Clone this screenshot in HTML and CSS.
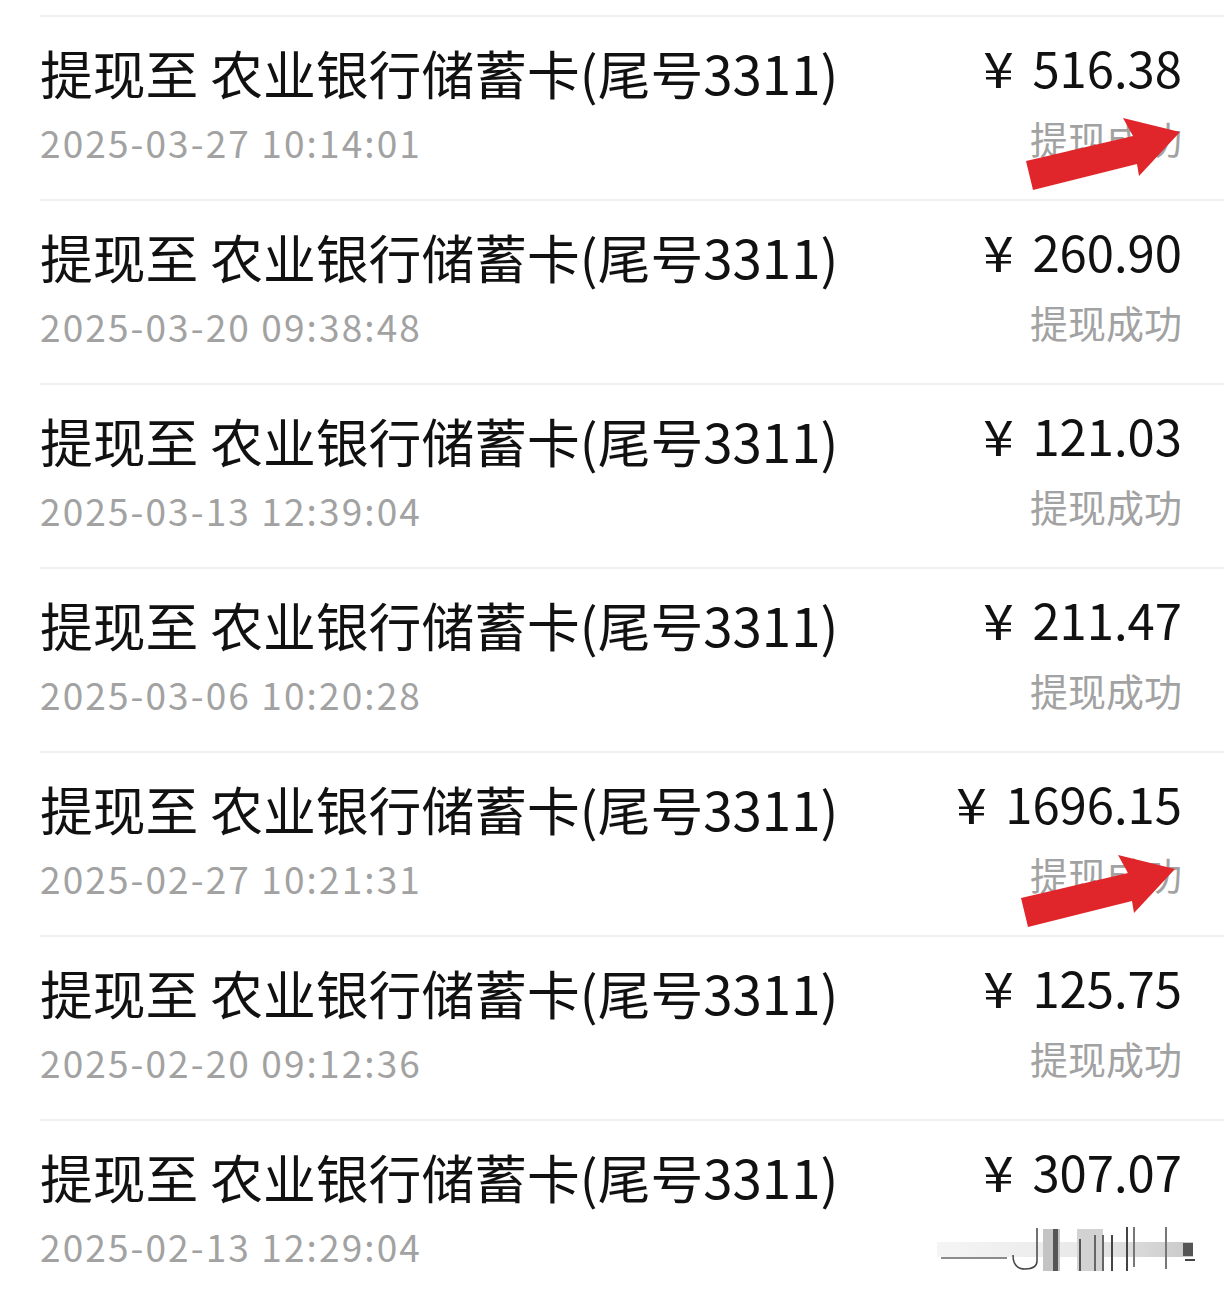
FILE: index.html
```html
<!DOCTYPE html>
<html lang="zh-CN">
<head>
    <meta charset="UTF-8">
    <meta name="viewport" content="width=device-width, initial-scale=1.0">
    <title>提现记录</title>
    <link rel="stylesheet" href="styles.css">
</head>
<body>
    <ul class="records">
        <li class="record">
            <div class="record-main">
                <div class="record-title">提现至 农业银行储蓄卡(尾号3311)</div>
                <div class="record-time">2025-03-27 10:14:01</div>
            </div>
            <div class="record-side">
                <div class="record-amount"><span class="yen">¥</span>516.38</div>
                <div class="record-status">提现成功</div>
            </div>
            <svg class="arrow" viewBox="0 0 165 80" width="165" height="80">
                <polygon points="6,48 113,23 103,5 160,19 119,63 117,51 13,77" fill="#e0262a"/>
            </svg>
        </li>
        <li class="record">
            <div class="record-main">
                <div class="record-title">提现至 农业银行储蓄卡(尾号3311)</div>
                <div class="record-time">2025-03-20 09:38:48</div>
            </div>
            <div class="record-side">
                <div class="record-amount"><span class="yen">¥</span>260.90</div>
                <div class="record-status">提现成功</div>
            </div>
        </li>
        <li class="record">
            <div class="record-main">
                <div class="record-title">提现至 农业银行储蓄卡(尾号3311)</div>
                <div class="record-time">2025-03-13 12:39:04</div>
            </div>
            <div class="record-side">
                <div class="record-amount"><span class="yen">¥</span>121.03</div>
                <div class="record-status">提现成功</div>
            </div>
        </li>
        <li class="record">
            <div class="record-main">
                <div class="record-title">提现至 农业银行储蓄卡(尾号3311)</div>
                <div class="record-time">2025-03-06 10:20:28</div>
            </div>
            <div class="record-side">
                <div class="record-amount"><span class="yen">¥</span>211.47</div>
                <div class="record-status">提现成功</div>
            </div>
        </li>
        <li class="record">
            <div class="record-main">
                <div class="record-title">提现至 农业银行储蓄卡(尾号3311)</div>
                <div class="record-time">2025-02-27 10:21:31</div>
            </div>
            <div class="record-side">
                <div class="record-amount"><span class="yen">¥</span>1696.15</div>
                <div class="record-status">提现成功</div>
            </div>
            <svg class="arrow arrow-low" viewBox="0 0 165 80" width="165" height="80">
                <polygon points="6,48 113,23 103,5 160,19 119,63 117,51 13,77" fill="#e0262a"/>
            </svg>
        </li>
        <li class="record">
            <div class="record-main">
                <div class="record-title">提现至 农业银行储蓄卡(尾号3311)</div>
                <div class="record-time">2025-02-20 09:12:36</div>
            </div>
            <div class="record-side">
                <div class="record-amount"><span class="yen">¥</span>125.75</div>
                <div class="record-status">提现成功</div>
            </div>
        </li>
        <li class="record">
            <div class="record-main">
                <div class="record-title">提现至 农业银行储蓄卡(尾号3311)</div>
                <div class="record-time">2025-02-13 12:29:04</div>
            </div>
            <div class="record-side">
                <div class="record-amount"><span class="yen">¥</span>307.07</div>
                <div class="record-status record-status-hidden">提现成功</div>
            </div>
            <!-- 截图底部的水印残影 -->
            <svg class="smear" viewBox="0 0 260 50" width="260" height="50">
                <defs>
                    <linearGradient id="band" x1="0" x2="1" y1="0" y2="0">
                        <stop offset="0" stop-color="#f5f5f5"/>
                        <stop offset="0.6" stop-color="#e8e8e8"/>
                        <stop offset="1" stop-color="#c8c8c8"/>
                    </linearGradient>
                </defs>
                <rect x="0" y="17" width="256" height="15" fill="url(#band)"/>
                <rect x="246" y="18" width="10" height="13" fill="#555"/>
                <line x1="4" y1="33" x2="70" y2="33" stroke="#666" stroke-width="1.5"/>
                <path d="M76 30 Q76 44 88 44 Q100 44 100 36 L100 3" fill="none" stroke="#444" stroke-width="1.5"/>
                <rect x="106" y="4" width="17" height="42" fill="#c4c4c4"/>
                <rect x="116" y="4" width="5" height="42" fill="#555"/>
                <rect x="140" y="4" width="26" height="42" fill="#d2d2d2"/>
                <rect x="142" y="14" width="2" height="32" fill="#555"/>
                <rect x="157" y="10" width="2" height="36" fill="#666"/>
                <rect x="165" y="10" width="2" height="36" fill="#666"/>
                <rect x="174" y="10" width="2" height="36" fill="#444"/>
                <rect x="189" y="2" width="2" height="44" fill="#444"/>
                <rect x="196" y="2" width="2" height="40" fill="#777"/>
                <rect x="228" y="2" width="2" height="42" fill="#777"/>
                <rect x="248" y="34" width="10" height="2" fill="#444"/>
            </svg>
        </li>
    </ul>
</body>
</html>
```

FILE: styles.css
```css
body {
    margin: 0;
    background-color: #fff;
    font-family: "Noto Sans CJK SC", "Noto Sans", sans-serif;
    overflow: hidden;
}
.records {
    list-style: none;
    margin: 15px 0 0 40px;
    padding: 0;
}
.record {
    position: relative;
    display: flex;
    justify-content: space-between;
    align-items: flex-start;
    box-sizing: border-box;
    height: 184px;
    padding: 23px 42px 0 0;
    border-top: 2px solid #efefef;
}
.record-title {
    font-size: 52.8px;
    line-height: 64px;
    color: #111;
    white-space: nowrap;
}
.record-time {
    font-size: 37px;
    line-height: 76px;
    letter-spacing: 2.1px;
    color: #a2a2a2;
}
.record-side {
    text-align: right;
}
.record-amount {
    font-size: 49px;
    line-height: 54px;
    color: #111;
    white-space: nowrap;
}
.yen {
    display: inline-block;
    margin-right: 20px;
    transform: scaleX(1.12);
}
.record-status {
    font-size: 38px;
    line-height: 88px;
    color: #a2a2a2;
}
.record-status-hidden {
    visibility: hidden;
}
.arrow {
    position: absolute;
    left: 980px;
    top: 96px;
}
.arrow-low {
    left: 975px;
    top: 97px;
}
.smear {
    position: absolute;
    left: 897px;
    top: 104px;
}
```
